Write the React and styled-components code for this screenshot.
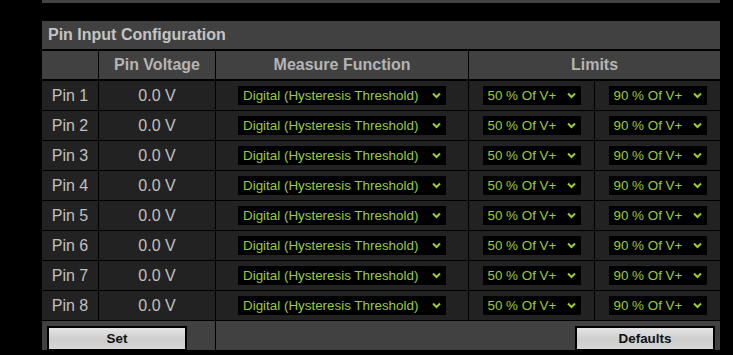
import React from "react";
import styled, { createGlobalStyle } from "styled-components";

const Global = createGlobalStyle`
  html, body { margin: 0; padding: 0; background: #000; }
  body { font-family: "Liberation Sans", Arial, sans-serif; }
`;

const Page = styled.div`
  padding: 0 13px 0 42px;
  width: 678px;
`;

const TopBar = styled.div`
  height: 3px;
  background: #424242;
  margin-bottom: 18px;
`;

const Grid = styled.div`
  display: grid;
  grid-template-columns: 56px 116px 252px 125px 125px;
  grid-auto-rows: 29px;
  gap: 1px;
  background: #000;
`;

const Title = styled.div`
  grid-column: 1 / -1;
  height: 28px;
  background: #414141;
  color: #c4c4c4;
  font-weight: bold;
  font-size: 16px;
  display: flex;
  align-items: center;
  padding-left: 6px;
`;

const Head = styled.div`
  grid-column: ${(p) => p.$span || "auto"};
  height: 28px;
  background: #414141;
  color: #b4b4b4;
  font-weight: bold;
  font-size: 16px;
  display: flex;
  align-items: center;
  justify-content: center;
`;

const Cell = styled.div`
  background: #222;
  color: #c0c0c0;
  font-size: 16px;
  display: flex;
  align-items: center;
  justify-content: center;
`;

const SelectWrap = styled.div`
  position: relative;
  width: ${(p) => p.$w}px;
  height: 19px;
`;

const Select = styled.select`
  appearance: none;
  -webkit-appearance: none;
  width: 100%;
  height: 100%;
  margin: 0;
  border: none;
  border-radius: 0;
  outline: none;
  background: #000;
  color: #9acd32;
  font-family: "Liberation Sans", Arial, sans-serif;
  font-size: 13.4px;
  padding: 0 0 0 5px;
`;

const Chevron = styled.svg`
  position: absolute;
  right: 5px;
  top: 6px;
  width: 9px;
  height: 7px;
  pointer-events: none;
`;

const Footer = styled.div`
  grid-column: ${(p) => p.$span};
  background: #414141;
  height: 40px;
  display: flex;
  justify-content: ${(p) => p.$justify};
  padding: 5px 5px 0;
  box-sizing: border-box;
`;

const Button = styled.button`
  width: 140px;
  height: 25px;
  border: 2px solid #000;
  background: linear-gradient(to bottom, #e4e4e4 0%, #cdcdcd 55%, #d6d6d6 100%);
  font-family: "Liberation Sans", Arial, sans-serif;
  font-weight: bold;
  font-size: 13.4px;
  color: #111;
  padding: 0;
`;

const Dropdown = ({ w, value }) => (
  <SelectWrap $w={w}>
    <Select defaultValue={value}>
      <option>{value}</option>
    </Select>
    <Chevron viewBox="0 0 9 7">
      <path d="M1 1.5 L4.5 5 L8 1.5" fill="none" stroke="#9acd32" strokeWidth="2" />
    </Chevron>
  </SelectWrap>
);

const pins = [1, 2, 3, 4, 5, 6, 7, 8];

export default function App() {
  return (
    <>
      <Global />
      <Page>
        <TopBar />
        <Grid>
          <Title>Pin Input Configuration</Title>
          <Head />
          <Head>Pin Voltage</Head>
          <Head>Measure Function</Head>
          <Head $span="span 2">Limits</Head>
          {pins.map((n) => (
            <React.Fragment key={n}>
              <Cell>Pin {n}</Cell>
              <Cell>0.0 V</Cell>
              <Cell>
                <Dropdown w={208} value="Digital (Hysteresis Threshold)" />
              </Cell>
              <Cell>
                <Dropdown w={98} value="50 % Of V+" />
              </Cell>
              <Cell>
                <Dropdown w={98} value="90 % Of V+" />
              </Cell>
            </React.Fragment>
          ))}
          <Footer $span="span 2" $justify="flex-start">
            <Button>Set</Button>
          </Footer>
          <Footer $span="span 3" $justify="flex-end">
            <Button>Defaults</Button>
          </Footer>
        </Grid>
      </Page>
    </>
  );
}
